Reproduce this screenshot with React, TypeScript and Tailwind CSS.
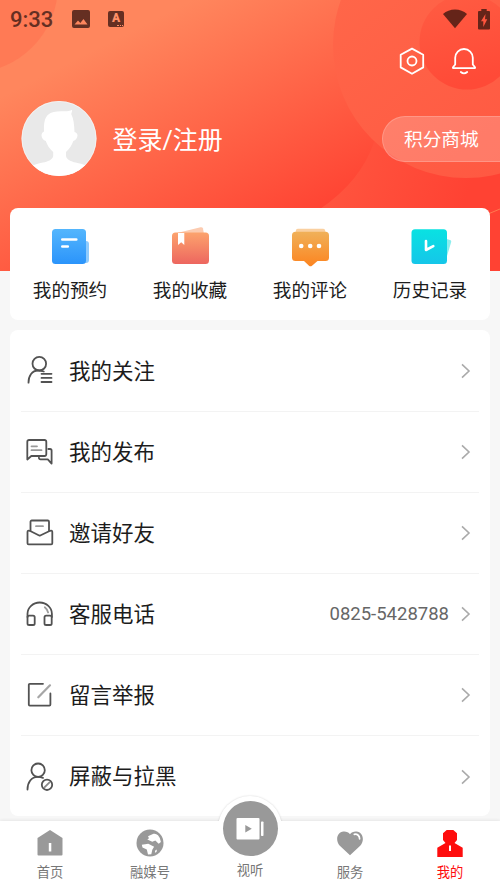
import { ReactNode } from "react";

interface MenuRow {
    label: string;
    icon: ReactNode;
    extra?: string;
}

const rows: MenuRow[] = [
    {
        label: "我的关注",
        icon: (
            <>
                <circle cx="15.3" cy="8.7" r="6.8" />
                <path d="M4.5 27.7c0-7 3.6-12 9.5-12.2 2.5-.1 4 .4 5.8 1" />
                <path d="M17.5 18.8h10M17.5 22.9h10M17.5 27h10" />
            </>
        ),
    },
    {
        label: "我的发布",
        icon: (
            <>
                <path d="M5 4h15.6a1.7 1.7 0 0 1 1.7 1.7v12.6a1.7 1.7 0 0 1-1.7 1.7H7.3l-4 3.5V5.7A1.7 1.7 0 0 1 5 4z" />
                <path d="M24.3 13h1.7a1.6 1.6 0 0 1 1.6 1.6v13l-3.8-4.3h-7.3a1.6 1.6 0 0 1-1.6-1.6" />
                <path d="M7.5 10.3h5.5M7.5 14.2h10" stroke="#9a9a9a" />
            </>
        ),
    },
    {
        label: "邀请好友",
        icon: (
            <>
                <path d="M6.5 13.5V4.8a1.3 1.3 0 0 1 1.3-1.3h15.9A1.3 1.3 0 0 1 25 4.800V13.500" />
                <path d="M15.700 18.700 5.700 13.800c-1.400-.5-2.200 0-2.200 1.200v11.200a1.100 1.100 0 0 0 1.100 1.100h22.600a1.100 1.100 0 0 0 1.100-1.100V15c0-1.200-.8-1.700-2.200-1.200z" />
                <path d="M12 9.200h7" stroke="#9a9a9a" />
            </>
        ),
    },
    {
        label: "客服电话",
        extra: "0825-5428788",
        icon: (
            <>
                <path d="M3.500 19v-3.200a12.200 11.300 0 0 1 24.400 0V19" />
                <rect x="3.500" y="17.600" width="7.200" height="9.400" rx="1.600" />
                <rect x="20.500" y="17.600" width="7.200" height="9.400" rx="1.600" />
                <path d="M20.800 9.300c1.700 1.300 2.700 3 3.300 5.200" stroke="#9a9a9a" />
            </>
        ),
    },
    {
        label: "留言举报",
        icon: (
            <>
                <path d="M19 4.800H5.800a1 1 0 0 0-1 1v19.800a1 1 0 0 0 1 1h19.600a1 1 0 0 0 1-1V14.500" />
                <path d="m26 6.300-11.700 12" stroke="#a6a6a6" strokeWidth="2.200" />
            </>
        ),
    },
    {
        label: "屏蔽与拉黑",
        icon: (
            <>
                <circle cx="14.100" cy="9.200" r="6.700" />
                <path d="M3.500 28.500c0-7.200 3.900-12.600 10.300-12.600 2.100 0 3.700.4 5.200 1" />
                <circle cx="23" cy="23.800" r="5.200" />
                <path d="m20.700 26.200 4.800-4.800" stroke="#8a8a8a" />
            </>
        ),
    },
];

export default function App() {
    return (
        <div className="relative isolate flex h-[888px] w-[500px] flex-col overflow-hidden bg-[#f7f7f7] font-['Roboto','Noto_Sans_CJK_SC',sans-serif] text-[#1c1c1c]">
            <HeaderBackground />
            <StatusBar />
            <div className="flex h-[46px] items-center justify-end gap-[24px] pr-[22px]">
                {/* settings */}
                <svg width="28" height="30" viewBox="0 0 28 30" fill="none" stroke="white" strokeWidth="1.8" strokeLinejoin="round">
                    <path d="M14 2.600 25.200 8.800v12.600L14 27.800 2.700 21.400V8.800z" />
                    <circle cx="14" cy="15" r="4.500" />
                </svg>
                {/* notifications */}
                <svg width="28" height="30" viewBox="0 0 28 30" fill="none" stroke="white" strokeWidth="1.8" strokeLinecap="round" strokeLinejoin="round">
                    <path d="M5.200 18.500v-6.700a8.800 8.800 0 0 1 17.600 0v6.700l2.200 2.800c.3.500 0 .9-.6.900H3.600c-.6 0-.9-.4-.6-.900z" />
                    <path d="M10.800 26c1.800 1.500 4.600 1.500 6.400 0" />
                </svg>
            </div>
            <div className="mt-[17px] flex h-[76px] items-center pl-[21px]">
                <Avatar />
                <div className="ml-[15.5px] pt-[3px] text-[25px] text-white">登录/注册</div>
                <div className="ml-auto flex h-[46px] w-[118px] items-center rounded-l-full border border-r-0 border-white/20 bg-white/20 pt-[2px] pl-[21px] text-[18.7px] text-white">
                    积分商城
                </div>
            </div>

            <div className="mx-[10px] mt-[31px] grid h-[112px] shrink-0 grid-cols-4 rounded-[8px] bg-white">
                <Shortcut label="我的预约">
                    <rect x="28" y="13" width="10" height="22" rx="3" fill="#8fcbfd" />
                    <rect x="1" y="1" width="34" height="35" rx="3.5" fill="url(#blue)" />
                    <path d="M11.300 11.500h14M11.300 18.500h5.500" stroke="white" strokeWidth="2.600" strokeLinecap="round" />
                </Shortcut>
                <Shortcut label="我的收藏">
                    <path d="M4 5.500 29.500-.7q2-.4 2.500 1.300L33 6z" fill="#fccbb0" />
                    <rect x="1" y="4.500" width="37" height="31.500" rx="3.500" fill="url(#coral)" />
                    <path d="M7 5h6.300v12L10.200 14.300 7 17z" fill="white" />
                </Shortcut>
                <Shortcut label="我的评论">
                    <path d="M4.500 4.500 5 2q.4-1.300 2-1.300h25q1.600 0 2 1.300l.6 2.500z" fill="#fad0a0" />
                    <path d="M4.500 3.700h30A3.500 3.500 0 0 1 38 7.200V29.500a3.500 3.500 0 0 1-3.500 3.500H26.500L21 37.700q-1.500 1-3 0L13 33H4.500A3.500 3.500 0 0 1 1 29.500V7.200a3.500 3.500 0 0 1 3.500-3.500z" fill="url(#orange)" />
                    <circle cx="10.200" cy="18" r="2.300" fill="white" />
                    <circle cx="19.200" cy="18" r="2.300" fill="white" />
                    <circle cx="28" cy="18" r="2.300" fill="white" />
                </Shortcut>
                <Shortcut label="历史记录">
                    <path d="M34 10.500 39 12q1.600.6 1.200 2L34.500 33z" fill="#8ceeee" />
                    <rect x="0.500" y="1.300" width="35.500" height="34.700" rx="3.500" fill="url(#cyan)" />
                    <path d="M15 13v9l7.300-3.800" fill="none" stroke="white" strokeWidth="2.600" strokeLinecap="round" strokeLinejoin="round" />
                </Shortcut>
            </div>

            <div className="mx-[10px] mt-[10px] h-[486px] shrink-0 rounded-[8px] bg-white px-[11px] pt-[1px]">
                {rows.map((row) => (
                    <div key={row.label} className="flex h-[81px] items-center border-b border-[#f3f3f3] last:border-b-0">
                        <svg className="ml-[3px]" width="32" height="32" viewBox="0 0 32 32" fill="none" stroke="#525252" strokeWidth="1.8" strokeLinecap="round" strokeLinejoin="round">
                            {row.icon}
                        </svg>
                        <div className="ml-[13px] pt-[2px] text-[21.5px]">{row.label}</div>
                        <div className="ml-auto pt-[1px] text-[18.5px] text-[#666]">{row.extra}</div>
                        <svg className="ml-[11px] mr-[8px]" width="11" height="16" viewBox="0 0 11 16" fill="none" stroke="#aaa" strokeWidth="1.6">
                            <path d="m2 1.300 7 6.700-7 6.700" />
                        </svg>
                    </div>
                ))}
            </div>

            <TabBar />
        </div>
    );
}

function HeaderBackground() {
    return (
        <svg className="absolute top-0 left-0 -z-10" width="500" height="271" viewBox="0 0 500 271">
            <defs>
                <linearGradient id="header" gradientUnits="userSpaceOnUse" x1="62" y1="66" x2="172" y2="284">
                    <stop offset="0" stopColor="#ff865d" />
                    <stop offset="1" stopColor="#ff4433" />
                </linearGradient>
                <linearGradient id="ring" x1="0" y1="0" x2="0.8" y2="1">
                    <stop offset="0" stopColor="#ff6a4b" />
                    <stop offset="1" stopColor="#ff5741" />
                </linearGradient>
                <linearGradient id="sun" x1="0" y1="0" x2="0.3" y2="1">
                    <stop offset="0" stopColor="#ff5d43" />
                    <stop offset="1" stopColor="#ff4a37" />
                </linearGradient>
                <linearGradient id="corner" gradientUnits="userSpaceOnUse" x1="340" y1="170" x2="460" y2="215">
                    <stop offset="0" stopColor="#ff543e" />
                    <stop offset="1" stopColor="#ff4233" />
                </linearGradient>
                <linearGradient id="blue" x1="0" y1="0" x2="0" y2="1">
                    <stop offset="0" stopColor="#54b6fd" />
                    <stop offset="1" stopColor="#2b94fb" />
                </linearGradient>
                <linearGradient id="coral" x1="0" y1="0" x2="0" y2="1">
                    <stop offset="0" stopColor="#fca36d" />
                    <stop offset="1" stopColor="#ed665f" />
                </linearGradient>
                <linearGradient id="orange" x1="0" y1="0" x2="0" y2="1">
                    <stop offset="0" stopColor="#f0b159" />
                    <stop offset="1" stopColor="#fc8420" />
                </linearGradient>
                <linearGradient id="cyan" x1="0" y1="0" x2="0" y2="1">
                    <stop offset="0" stopColor="#09e2e2" />
                    <stop offset="1" stopColor="#15c6e9" />
                </linearGradient>
            </defs>
            <rect width="500" height="271" fill="url(#header)" />
            <circle cx="-30" cy="-15" r="88" fill="#ff7552" fillOpacity="0.7" />
            <path d="M374 142Q361 181 320 209L300 271H500V130z" fill="url(#corner)" />
            <circle cx="466" cy="45" r="133" fill="url(#ring)" />
            <circle cx="467" cy="42" r="47.500" fill="url(#sun)" />
            <path d="M488 214 500 209" stroke="#ff7a50" />
        </svg>
    );
}

function StatusBar() {
    return (
        <div className="flex h-[38px] items-center px-[10px] text-[#652f22]">
            <div className="pt-[2px] text-[22px] leading-none font-medium">9:33</div>
            <svg className="ml-[19px]" width="18" height="18" viewBox="0 0 18 18" fill="currentColor">
                <path fillRule="evenodd" d="M2 0h14a2 2 0 0 1 2 2v14a2 2 0 0 1-2 2H2a2 2 0 0 1-2-2V2a2 2 0 0 1 2-2zM2.500 14.500h13L11.500 9l-3.200 4L6 10.400z" />
            </svg>
            <div className="relative ml-[18px] flex h-[16.5px] w-[15.5px] justify-center rounded-[2px] bg-[#652f22] text-[12px] leading-[15px] font-black text-[#ff9068]">
                A
                <div className="absolute right-[1px] bottom-[1px] w-[6px] border-b border-dotted border-[#ff9068]"></div>
            </div>
            <svg className="ml-auto" width="24" height="20" viewBox="0 0 24 20" fill="#652419">
                <path d="M12 19.300 0 5Q5 .4 12 .4T24 5z" />
            </svg>
            <svg className="ml-[11px]" width="12" height="21" viewBox="0 0 12 21" fill="#652419">
                <path fillRule="evenodd" d="M3.300 0h5.400v2H11a1 1 0 0 1 1 1v16.500a1 1 0 0 1-1 1H1a1 1 0 0 1-1-1V3a1 1 0 0 1 1-1h2.300zM7.500 5 3 12.200h2.300V18L9.300 10.300H7z" />
            </svg>
        </div>
    );
}

function Avatar() {
    return (
        <svg width="76" height="76" viewBox="0 0 76 76">
            <defs>
                <clipPath id="round">
                    <circle cx="38" cy="37.5" r="37.5" />
                </clipPath>
            </defs>
            <g clipPath="url(#round)">
                <rect width="76" height="76" fill="#e9e9e9" />
                <path d="M23 30.500c-.3-9 .7-15.500 6.500-18.500 4-1.700 9-1.600 14-1.700 3 0 5.500-.2 7.700-1.500-.1 1.700-.4 3-1 4.200 2.500 4.500 3 11 3.300 18 1.800.5 3 1.700 3 3.500 0 2.600-2 4.800-4.200 5.500-1.500 4.200-3.800 8-7.300 11v4c.8 4 5 5.400 9.600 6.600 4.200 1 7.300 1.700 9.600 2.800L64 76H12V64.400c3-1.300 6.600-2 10-2.800 4.600-1.100 9.500-2.500 10.200-6.600v-4c-3.600-3-6-6.800-7.400-11-2.200-.7-4.300-2.900-4.300-5.500 0-1.800.9-3.300 2.500-4z" fill="white" />
            </g>
            <circle cx="38" cy="37.5" r="37.1" fill="none" stroke="white" strokeOpacity="0.6" strokeWidth="0.8" />
        </svg>
    );
}

function Shortcut({ label, children }: { label: string; children: ReactNode }) {
    return (
        <div className="flex flex-col items-center pt-[20px]">
            <svg className="overflow-visible" width="39" height="38" viewBox="0 0 39 38">
                {children}
            </svg>
            <div className="mt-[11px] text-[18.6px] leading-[28px]">{label}</div>
        </div>
    );
}

function TabBar() {
    return (
        <div className="relative mt-[5px] grid h-[67px] shrink-0 grid-cols-5 bg-white text-[#777] shadow-[0_-1px_3px_rgba(0,0,0,0.07)]">
            <Tab label="首页">
                <path d="M14 1 26.500 9v16.500a1 1 0 0 1-1 1h-23a1 1 0 0 1-1-1V9z" fill="#999" />
                <rect x="12.800" y="14" width="2.500" height="8.500" fill="white" />
            </Tab>
            <Tab label="融媒号">
                <circle cx="14" cy="14" r="13.500" fill="#999" />
                <path d="M12 7.200 17.500 4.800q2.500-.6 4.500 1.500 2.700 2.900 2.900 6.700l-2.200 1.700-3.400-3.200-3 1.300-5-2.300 1.700-1.200zM5.800 15.700l6.500-1 5.800 3-1.800 3-1 4.500-3.300.300-1.200-5-4.300-2zM19.200 21.500l1.700-.9-.4 2.300-1.600.8z" fill="white" />
            </Tab>
            <div className="relative flex justify-center">
                {/* raised button, sits half out of the bar */}
                <div className="absolute -top-[25px] h-[64px] w-[64px] rounded-full bg-white shadow-[0_0_2px_rgba(0,0,0,0.18)]"></div>
                <div className="absolute top-0 h-[42px] w-[70px] bg-white"></div>
                <div className="absolute -top-[20px] flex h-[55px] w-[55px] items-center justify-center rounded-full bg-[#999]">
                    <svg width="28" height="24" viewBox="0 0 28 24" fill="white">
                        <path fillRule="evenodd" d="M1.500 1h21a1 1 0 0 1 1 1v19.500a1 1 0 0 1-1 1h-21a1 1 0 0 1-1-1V2a1 1 0 0 1 1-1zM9.300 8v7.500l6.500-3.700z" />
                        <rect x="25" y="4.500" width="2.500" height="14.500" rx="0.700" />
                    </svg>
                </div>
                <div className="relative mt-[40px] text-[13.3px] leading-[20px]">视听</div>
            </div>
            <Tab label="服务">
                <path d="M14 26.300 3.800 16.700C-1 11.500 1 3 7.500 2.600 10.300 2.400 12.700 3.500 14 5.200c1.300-1.700 3.700-2.800 6.500-2.600C27 3 29 11.500 24.200 16.700z" fill="#999" />
                <path d="M18.300 5.300c3.200-.5 5.300 1.500 5.300 4.500" fill="none" stroke="white" strokeWidth="1.700" strokeLinecap="round" />
            </Tab>
            <Tab label="我的" active>
                <path d="M10.700 1h6.600L21 4.300V11L18.500 14l8.200 4.800V28H1.300v-9.200L9.500 14 7 11V4.300z" fill="#fe0d0d" />
                <rect x="13" y="16.500" width="2" height="5.500" fill="white" />
            </Tab>
        </div>
    );
}

function Tab({ label, active, children }: { label: string; active?: boolean; children: ReactNode }) {
    return (
        <div className="flex flex-col items-center pt-[8px]">
            <svg width="28" height="28" viewBox="0 0 28 28">
                {children}
            </svg>
            <div className={active ? "mt-[6px] text-[13.3px] leading-[20px] text-[#fe0d0d]" : "mt-[6px] text-[13.3px] leading-[20px]"}>{label}</div>
        </div>
    );
}
